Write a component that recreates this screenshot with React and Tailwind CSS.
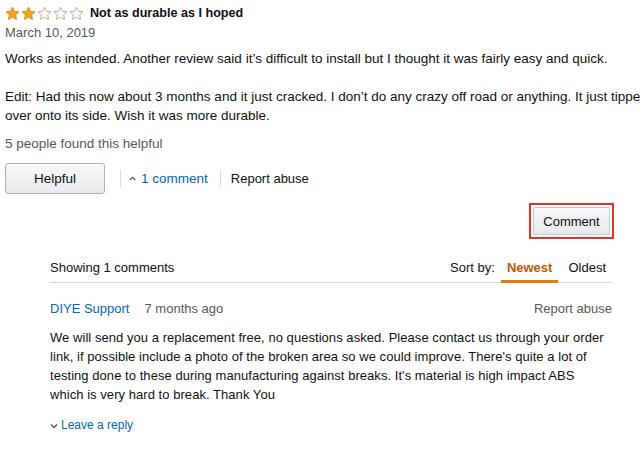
import React from "react";

function Star({ filled }) {
  return (
    <svg width="15" height="15" viewBox="0 0 24 24" className="block">
      <path
        d="M12 1.8l3.1 6.6 7.2.9-5.3 5 1.4 7.2L12 18l-6.4 3.5 1.4-7.2-5.3-5 7.2-.9z"
        fill={filled ? "#f7a51c" : "#ffffff"}
        stroke={filled ? "#d9861e" : "#b9a27a"}
        strokeWidth="1.4"
        strokeLinejoin="round"
      />
    </svg>
  );
}

export default function App() {
  return (
    <div
      className="w-[640px] h-[449px] overflow-hidden bg-white text-[#111] text-[13px] leading-[19px]"
      style={{ fontFamily: '"Liberation Sans", Arial, sans-serif' }}
    >
      <div className="pl-[5px] pt-[4px]">
        <div className="flex items-center h-[19px]">
          <div className="flex gap-[1px]">
            <Star filled />
            <Star filled />
            <Star />
            <Star />
            <Star />
          </div>
          <span className="ml-[6px] font-bold text-[12.6px]">Not as durable as I hoped</span>
        </div>
        <div className="text-[#565959]">March 10, 2019</div>
        <div className="mt-[7px] whitespace-nowrap text-[13.5px]">
          <div>Works as intended. Another review said it’s difficult to install but I thought it was fairly easy and quick.</div>
          <div className="h-[19px]" />
          <div>Edit: Had this now about 3 months and it just cracked. I don’t do any crazy off road or anything. It just tipped</div>
          <div>over onto its side. Wish it was more durable.</div>
        </div>
        <div className="mt-[9px] text-[#565959] text-[13.5px]">5 people found this helpful</div>
        <div className="mt-[10px] flex items-center">
          <button className="w-[100px] h-[31px] rounded-[3px] border border-[#adb1b8] bg-gradient-to-b from-[#f7f8fa] to-[#e7e9ec] text-[#111] text-[13.5px] shadow-[0_1px_0_rgba(255,255,255,.6)_inset]">
            Helpful
          </button>
          <span className="ml-[15px] w-px h-[17px] bg-[#ddd]" />
          <svg width="7" height="5" viewBox="0 0 7 5" className="ml-[8px]">
            <path d="M0.8 4l2.7-2.7 2.7 2.7" fill="none" stroke="#555" strokeWidth="1.2" />
          </svg>
          <span className="ml-[5px] text-[#0066c0] text-[13.5px]">1 comment</span>
          <span className="ml-[12px] w-px h-[17px] bg-[#ddd]" />
          <span className="ml-[10px]">Report abuse</span>
        </div>
      </div>

      <div className="mt-[9px] flex justify-end pr-[26px]">
        <div className="border-2 border-[#e3312b] p-[2px]">
          <button className="h-[28px] w-[77px] rounded-[2px] border border-[#c5c8cc] bg-gradient-to-b from-[#f7f8fa] to-[#e7e9ec] text-[13px]">
            Comment
          </button>
        </div>
      </div>

      <div className="ml-[50px] w-[562px] mt-[14px]">
        <div className="flex items-end justify-between border-b border-[#d5d9d9] h-[30px]">
          <span className="pb-[5px]">Showing 1 comments</span>
          <div className="flex items-end">
            <span className="pb-[5px] mr-[6px]">Sort by:</span>
            <span className="px-[6px] pb-[3px] font-bold text-[#c45500] border-b-[3px] border-[#e47911] -mb-px">Newest</span>
            <span className="ml-[10px] pb-[5px] mr-[6px]">Oldest</span>
          </div>
        </div>
        <div className="mt-[16px] flex justify-between">
          <div>
            <span className="text-[#0066c0]">DIYE Support</span>
            <span className="ml-[15px] text-[#565959]">7 months ago</span>
          </div>
          <span className="text-[#565959]">Report abuse</span>
        </div>
        <p className="mt-[10px] pr-[4px] tracking-[0.05px]">
          We will send you a replacement free, no questions asked. Please contact us through your order link, if possible include a photo of the broken area so we could improve. There's quite a lot of testing done to these during manufacturing against breaks. It's material is high impact ABS which is very hard to break. Thank You
        </p>
        <div className="mt-[12px] flex items-center text-[12px] text-[#0066c0]">
          <svg width="8" height="6" viewBox="0 0 8 6" className="mr-[3px]">
            <path d="M1 1.5l3 3 3-3" fill="none" stroke="#555" strokeWidth="1.3" />
          </svg>
          Leave a reply
        </div>
      </div>
    </div>
  );
}
